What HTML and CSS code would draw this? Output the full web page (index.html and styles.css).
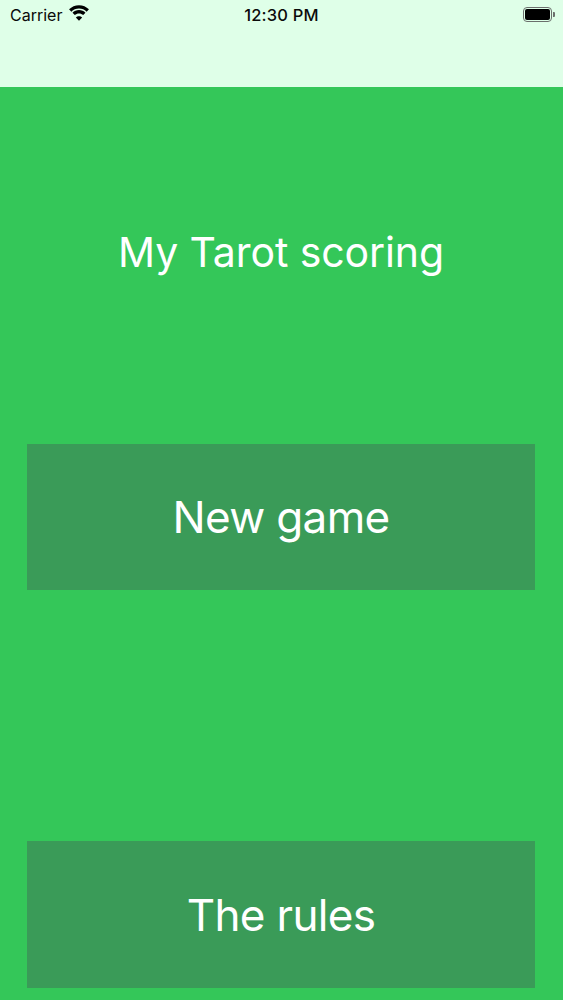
FILE: index.html
```html
<!DOCTYPE html>
<html lang="en">
<head>
<meta charset="utf-8">
<title>My Tarot scoring</title>
<link rel="stylesheet" href="styles.css">
</head>
<body>
<header class="top">
  <div class="status">
    <div class="status-left">
      <span class="carrier">Carrier</span>
      <svg class="wifi" viewBox="0 0 21 15" width="22" height="16"><path d="M10.500 3.300c2.800 0 5.400 1.100 7.300 2.900l2.200-2.300C17.500 1.500 14.200 0 10.500 0S3.500 1.500 1 3.900l2.200 2.300c1.900-1.800 4.500-2.900 7.300-2.900z"/><path d="M10.500 7.900c1.500 0 2.900.6 4 1.600l2.200-2.300c-1.600-1.500-3.800-2.500-6.200-2.500s-4.600 1-6.200 2.500l2.200 2.300c1.100-1 2.500-1.600 4-1.600z"/><path d="M10.500 14.800l3-3.100c-.8-.7-1.900-1.200-3-1.200s-2.200.5-3 1.200z"/></svg>
    </div>
    <span class="time">12:30 PM</span>
    <div class="battery"><span class="battery-body"><span class="battery-fill"></span></span><span class="battery-tip"></span></div>
  </div>
</header>
<main class="screen">
  <h1 class="title">My Tarot scoring</h1>
  <button class="action action-new">New game</button>
  <button class="action action-rules">The rules</button>
</main>
</body>
</html>
```
FILE: styles.css
```css
* { box-sizing: border-box; }
html, body { margin: 0; padding: 0; }
body {
  width: 563px;
  height: 1000px;
  overflow: hidden;
  background: #34c759;
  font-family: Inter, "Liberation Sans", sans-serif;
  display: flex;
  flex-direction: column;
}
.top {
  height: 87px;
  background: #dfffe8;
  flex: none;
}
.status {
  height: 29px;
  display: grid;
  grid-template-columns: 1fr auto 1fr;
  align-items: center;
  color: #0a0a0a;
  padding: 0 10px;
}
.status-left { display: flex; align-items: center; gap: 6px; }
.carrier { font-size: 16px; font-weight: 400; }
.wifi { display: block; fill: #000; margin-top: -4px; }
.time { font-size: 16.5px; font-weight: 500; letter-spacing: .2px; }
.battery { display: flex; align-items: center; justify-content: flex-end; margin-right: -2px; }
.battery-body {
  width: 29px;
  height: 15px;
  border: 1px solid #6b6f6c;
  border-radius: 4px;
  padding: 1px;
  display: block;
}
.battery-fill { display: block; height: 100%; background: #000; border-radius: 2px; }
.battery-tip { width: 2px; height: 5px; background: #6b6f6c; margin-left: 1px; border-radius: 0 1px 1px 0; }
.screen {
  flex: 1;
  display: flex;
  flex-direction: column;
  align-items: flex-start;
  padding: 0 27px;
}
.title {
  margin: 139px 0 0;
  width: 508px;
  text-align: center;
  height: 52px;
  line-height: 52px;
  font-size: 41px;
  font-weight: 400;
  color: #fff;
  white-space: nowrap;
  letter-spacing: -.1px;
}
.action {
  width: 508px;
  height: 147px;
  flex: none;
  border: 0;
  background: #3a9b58;
  color: #fff;
  font-family: inherit;
  font-size: 44px;
  font-weight: 400;
  letter-spacing: -.65px;
  padding: 0;
}
.action-new { margin-top: 166px; height: 146px; }
.action-rules { margin-top: 251px; }
```
